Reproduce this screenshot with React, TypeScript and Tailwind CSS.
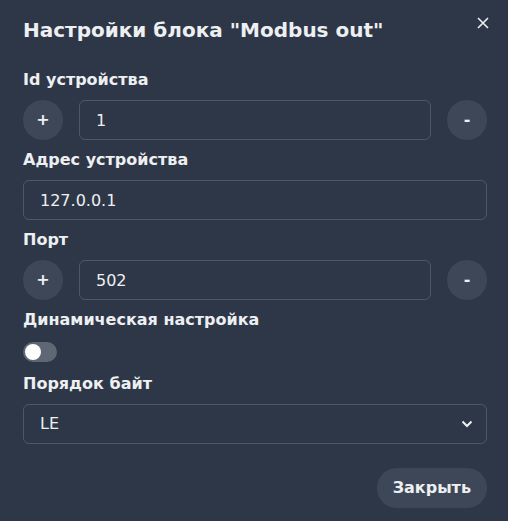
import { FC, useState } from "react";

const StepField: FC<{ value: string }> = ({ value }) => (
  <div className="flex items-center gap-4 h-10">
    <button className="w-10 h-10 shrink-0 rounded-full bg-[#3e4757] font-bold text-base flex items-center justify-center">
      +
    </button>
    <input
      readOnly
      value={value}
      className="flex-1 min-w-0 h-10 px-4 rounded-md border border-[#4f5765] bg-transparent text-base text-[#eeeff1] outline-none"
    />
    <button className="w-10 h-10 shrink-0 rounded-full bg-[#3e4757] font-bold text-base flex items-center justify-center">
      -
    </button>
  </div>
);

const App: FC = () => {
  const [dynamic, setDynamic] = useState(false); // динамическая настройка

  return (
    <div className="relative min-h-screen bg-[#2d3748] text-[#eeeff1] font-['DejaVu_Sans',sans-serif]">
      <header className="px-[23px] py-4 text-xl leading-7 font-bold">
        Настройки блока "Modbus out"
      </header>

      <button className="absolute top-[11px] right-[13px] w-6 h-6 flex items-center justify-center text-[#eeeff1]">
        <svg width="12" height="12" viewBox="0 0 12 12" fill="none" stroke="currentColor" strokeWidth="1.6">
          <path d="M1 1 L11 11 M11 1 L1 11" />
        </svg>
      </button>

      <div className="px-[23px] pt-2 pb-2">
        <div className="w-[464px] flex flex-col gap-2">
          <label className="leading-6 font-bold">Id устройства</label>
          <StepField value="1" />

          <label className="leading-6 font-bold">Адрес устройства</label>
          <input
            readOnly
            value="127.0.0.1"
            className="h-10 px-4 rounded-md border border-[#4f5765] bg-transparent text-base text-[#eeeff1] outline-none"
          />

          <label className="leading-6 font-bold">Порт</label>
          <StepField value="502" />

          <label className="leading-6 font-bold">Динамическая настройка</label>
          <div className="h-6 flex items-center">
            <button
              onClick={() => setDynamic(!dynamic)}
              className={`w-[34px] h-5 p-[2px] rounded-full flex ${dynamic ? "bg-[#90cdf4] justify-end" : "bg-[#5f6774] justify-start"}`}
            >
              <span className="w-4 h-4 rounded-full bg-white" />
            </button>
          </div>

          <label className="leading-6 font-bold">Порядок байт</label>
          <div className="relative h-10 rounded-md border border-[#4f5765] flex items-center px-4">
            <span className="text-base">LE</span>
            <svg
              className="absolute right-[13px] top-1/2 -translate-y-1/2"
              width="12"
              height="12"
              viewBox="0 0 12 12"
              fill="none"
              stroke="currentColor"
              strokeWidth="2"
            >
              <path d="M1.5 3.5 L6 8 L10.5 3.5" />
            </svg>
          </div>
        </div>
      </div>

      <footer className="px-[23px] py-4">
        <div className="w-[464px] flex justify-end">
          <button className="h-10 px-4 rounded-full bg-[#3e4757] font-bold text-base">Закрыть</button>
        </div>
      </footer>
    </div>
  );
};

export default App;
